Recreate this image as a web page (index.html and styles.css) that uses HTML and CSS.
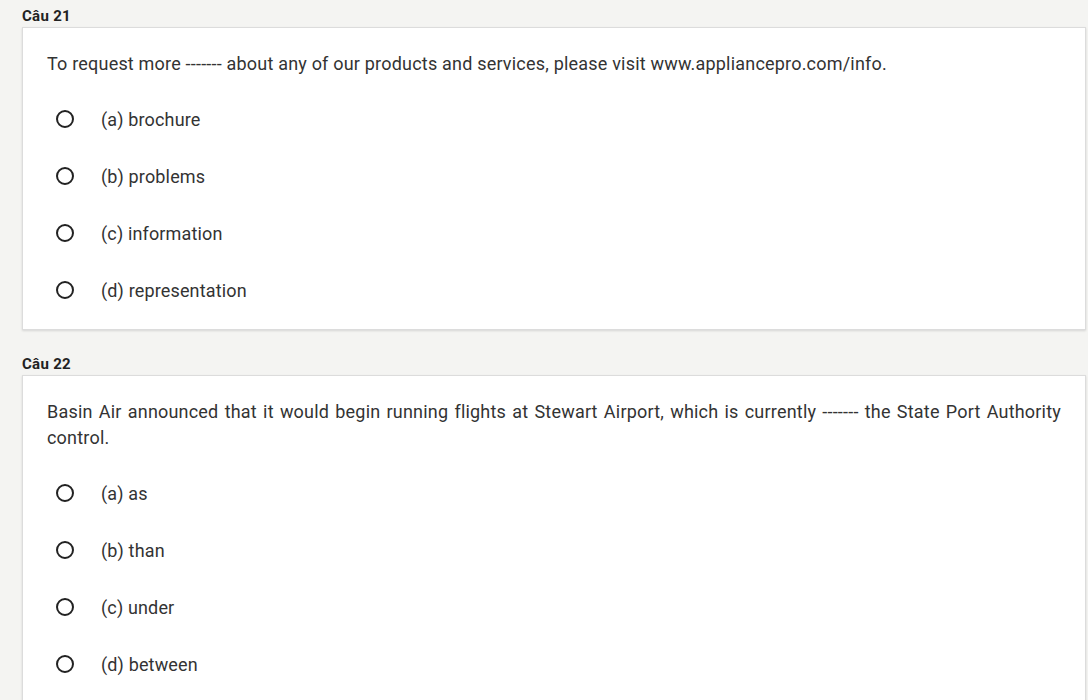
FILE: index.html
```html
<!DOCTYPE html>
<html lang="vi">
<head>
<meta charset="utf-8">
<link rel="stylesheet" href="styles.css">
</head>
<body>
<div class="page">
  <section class="question">
    <h3 class="q-title">Câu 21</h3>
    <div class="card">
      <p class="q-text">To request more ------- about any of our products and services, please visit www.appliancepro.com/info.</p>
      <ul class="options">
        <li class="option"><span class="radio"></span><span class="label">(a) brochure</span></li>
        <li class="option"><span class="radio"></span><span class="label">(b) problems</span></li>
        <li class="option"><span class="radio"></span><span class="label">(c) information</span></li>
        <li class="option"><span class="radio"></span><span class="label">(d) representation</span></li>
      </ul>
    </div>
  </section>
  <section class="question">
    <h3 class="q-title">Câu 22</h3>
    <div class="card">
      <p class="q-text">Basin Air announced that it would begin running flights at Stewart Airport, which is currently ------- the State Port Authority control.</p>
      <ul class="options">
        <li class="option"><span class="radio"></span><span class="label">(a) as</span></li>
        <li class="option"><span class="radio"></span><span class="label">(b) than</span></li>
        <li class="option"><span class="radio"></span><span class="label">(c) under</span></li>
        <li class="option"><span class="radio"></span><span class="label">(d) between</span></li>
      </ul>
    </div>
  </section>
</div>
</body>
</html>
```

FILE: styles.css
```css
html, body {
  margin: 0;
  padding: 0;
  background: #f4f4f2;
  font-family: Roboto, "Liberation Sans", Arial, sans-serif;
  color: #333;
}
.page {
  padding: 6px 2px 0 22px;
  display: flex;
  flex-direction: column;
  gap: 24px;
}
.question {
  display: flex;
  flex-direction: column;
}
.q-title {
  margin: 0;
  font-size: 15px;
  font-weight: 700;
  line-height: 20px;
  letter-spacing: 0.3px;
  color: #222;
}
.card {
  margin-top: 1px;
  background: #fff;
  border: 1px solid #dcdcdc;
  box-shadow: 0 1px 2px rgba(0,0,0,0.12);
  padding: 23px 24px 19px 24px;
}
.q-text {
  margin: 0;
  font-size: 18px;
  line-height: 26px;
  letter-spacing: 0.2px;
  text-align: justify;
  color: #333;
}
.options {
  list-style: none;
  margin: 22px 0 0 0;
  padding: 0;
  display: flex;
  flex-direction: column;
  gap: 17px;
}
.option {
  height: 40px;
  display: flex;
  align-items: center;
  padding-left: 9px;
}
.radio {
  width: 14px;
  height: 14px;
  border: 2px solid #222;
  border-radius: 50%;
  flex: none;
}
.label {
  margin-left: 27px;
  font-size: 18px;
  letter-spacing: 0.15px;
  color: #333;
}
```
